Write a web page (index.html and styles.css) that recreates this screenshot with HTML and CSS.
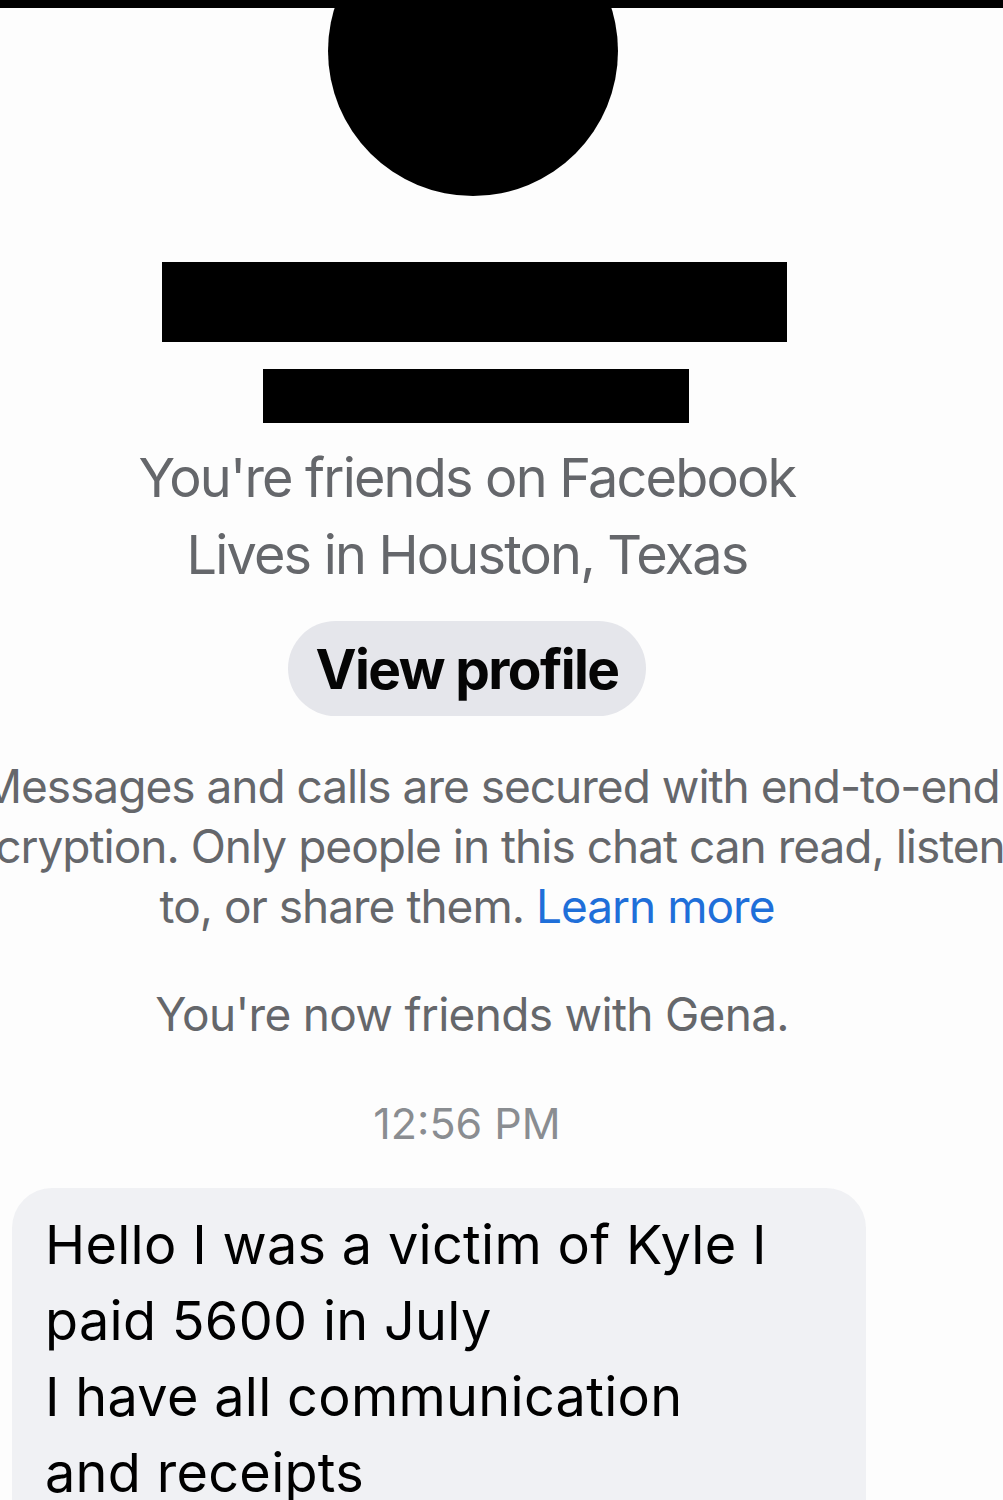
FILE: index.html
```html
<!DOCTYPE html>
<html lang="en">
<head>
<meta charset="utf-8">
<title>Chat</title>
<link rel="stylesheet" href="styles.css">
</head>
<body>
<div class="topbar"></div>
<main class="thread">
  <div class="avatar"></div>
  <div class="redact redact-name"></div>
  <div class="redact redact-sub"></div>
  <p class="profile-info">You're friends on Facebook<br>Lives in Houston, Texas</p>
  <div class="view-btn">View profile</div>
  <p class="e2ee"><span class="line l1">Messages and calls are secured with end-to-end</span><span class="line l2">encryption. Only people in this chat can read, listen</span><span class="line">to, or share them. <span class="link">Learn more</span></span></p>
  <p class="notice">You're now friends with Gena.</p>
  <p class="time">12:56 PM</p>
  <div class="bubble">Hello I was a victim of Kyle I<br>paid 5600 in July<br>I have all communication<br>and receipts</div>
</main>
</body>
</html>
```

FILE: styles.css
```css
html, body {
  margin: 0;
  padding: 0;
}
body {
  background: #fdfdfd;
  font-family: Inter, "Noto Sans", "Liberation Sans", sans-serif;
  overflow: hidden;
  height: 1500px;
}
.topbar {
  height: 8px;
  background: #000;
  position: relative;
  z-index: 2;
}
.thread {
  width: 934px;
  display: flex;
  flex-direction: column;
  align-items: center;
}
.avatar {
  width: 290px;
  height: 290px;
  border-radius: 50%;
  background: #000;
  margin-top: -102px;
  margin-left: 12px;
}
.redact {
  background: #000;
}
.redact-name {
  width: 625px;
  height: 80px;
  margin-top: 66px;
  margin-left: 15px;
}
.redact-sub {
  width: 426px;
  height: 54px;
  margin-top: 27px;
  margin-left: 18px;
}
.profile-info {
  margin: 16px 0 0;
  text-align: center;
  font-size: 54px;
  line-height: 77px;
  letter-spacing: -1.8px;
  color: #65676b;
}
.view-btn {
  margin-top: 28px;
  width: 358px;
  height: 95px;
  border-radius: 48px;
  background: #e5e6eb;
  display: flex;
  align-items: center;
  justify-content: center;
  font-size: 55px;
  font-weight: 700;
  letter-spacing: -1.6px;
  color: #050505;
}
.e2ee {
  margin: 40px 0 0;
  width: 1200px;
  flex: none;
  white-space: nowrap;
  text-align: center;
  font-size: 46px;
  line-height: 60px;
  letter-spacing: -1px;
  color: #65676b;
}
.line {
  display: block;
}
.l1 {
  padding-left: 46px;
}
.l2 {
  padding-left: 14px;
}
.link {
  color: #1f6fd9;
}
.notice {
  margin: 48px 0 0 10px;
  font-size: 46px;
  line-height: 60px;
  letter-spacing: -0.7px;
  color: #65676b;
}
.time {
  margin: 54px 0 0;
  font-size: 43px;
  line-height: 50px;
  letter-spacing: 0;
  color: #8a8d91;
}
.bubble {
  align-self: flex-start;
  margin: 40px 0 0 12px;
  width: 854px;
  box-sizing: border-box;
  padding: 19px 30px 40px 33px;
  background: #f0f1f4;
  border-radius: 40px;
  font-size: 54px;
  line-height: 76px;
  letter-spacing: 0.3px;
  color: #000;
}
```
